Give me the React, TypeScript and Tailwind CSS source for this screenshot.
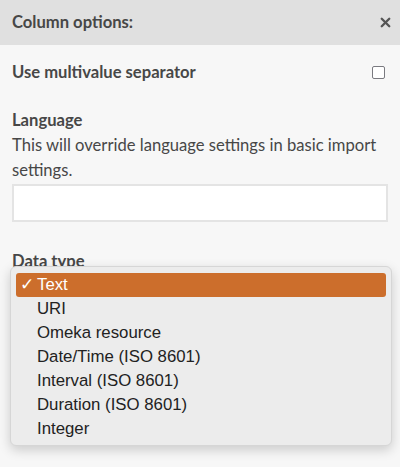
import { X } from 'lucide-react';

const options = [
  'URI',
  'Omeka resource',
  'Date/Time (ISO 8601)',
  'Interval (ISO 8601)',
  'Duration (ISO 8601)',
  'Integer',
];

export default function App() {
  return (
    <div className="w-[400px] h-[467px] bg-[#f7f7f7] text-[#474747] font-['Lato',sans-serif] relative overflow-hidden">
      {/* Header */}
      <div className="h-[45px] bg-[#e0e0e0] flex items-center justify-between pl-3 pr-[7px]">
        <h2 className="text-[16.6px] font-bold">Column options:</h2>
        <X size={15} strokeWidth={3.8} className="text-[#555]" />
      </div>

      <div className="px-3">
        {/* Multivalue */}
        <div className="flex items-center justify-between h-[55px]">
          <span className="text-[16.6px] font-bold">Use multivalue separator</span>
          <span className="w-[13px] h-[13px] border-[1.5px] border-[#7a7a80] rounded-[2px] bg-white mr-[3px]" />
        </div>

        {/* Language */}
        <div className="pt-[8px]">
          <div className="text-[16.6px] font-bold leading-[25px]">Language</div>
          <p className="text-[16.6px] leading-[25px]">
            This will override language settings in basic import settings.
          </p>
          <div className="mt-[1px] h-[38px] bg-white border-2 border-[#e4e4e4]" />
        </div>

        {/* Data type */}
        <div className="pt-[27px]">
          <div className="text-[16.6px] font-bold leading-[25px]">Data type</div>
        </div>
      </div>

      {/* Native select dropdown */}
      <div className="absolute left-[10px] top-[266px] w-[382px] h-[180px] rounded-[6px] bg-[#ececec] border border-[#d6d6d6] shadow-[0_4px_12px_rgba(0,0,0,0.18)] px-[5px] pt-[6px] font-['Liberation_Sans',Arial,sans-serif] text-[16.8px] text-[#222]">
        <div className="h-[24px] rounded-[3px] bg-[#cc6e2c] text-white flex items-center pl-[4px]">
          <span className="w-[17px]">✓</span>
          <span>Text</span>
        </div>
        {options.map(o => (
          <div key={o} className="h-[24px] flex items-center pl-[21px]">
            {o}
          </div>
        ))}
      </div>
    </div>
  );
}
